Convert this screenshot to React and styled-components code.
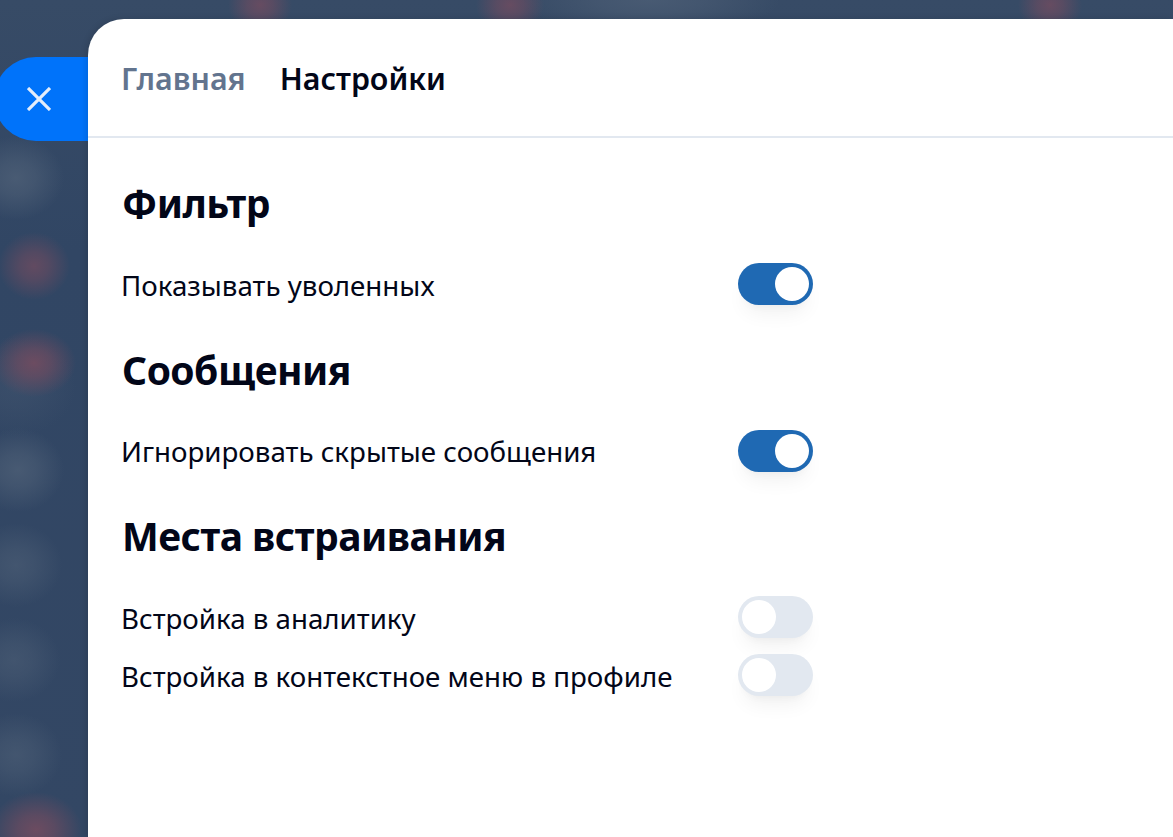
import React from "react";
import styled, { createGlobalStyle } from "styled-components";

const Global = createGlobalStyle`
  html, body { margin: 0; padding: 0; height: 100%; overflow: hidden; }
  body { font-family: "Noto Sans", "Open Sans", "Liberation Sans", sans-serif; background: #324764; }
  #root { height: 100%; }
`;

const blob = (x, y, rx, ry, rgb, a) =>
  `radial-gradient(${rx}px ${ry}px at ${x}px ${y}px, rgba(${rgb},${a}) 0%, rgba(${rgb},${a * 0.7}) 40%, rgba(${rgb},0) 100%)`;
const RED = "114,76,96";
const GREY = "74,92,116";

const Backdrop = styled.div`
  position: relative;
  height: 837px;
  overflow: hidden;
  box-sizing: border-box;
  padding: 19px 0 0 88px;
  background-color: #314664;
  background-image:
    ${blob(34, 266, 36, 34, RED, 0.75)},
    ${blob(34, 363, 42, 34, RED, 0.9)},
    ${blob(36, 830, 46, 38, RED, 0.9)},
    ${blob(260, 5, 32, 30, RED, 0.8)},
    ${blob(510, 5, 34, 30, RED, 0.8)},
    ${blob(1050, 5, 32, 30, RED, 0.8)},
    ${blob(650, 0, 130, 36, GREY, 0.9)},
    ${blob(16, 178, 48, 42, GREY, 0.95)},
    ${blob(16, 386, 60, 50, GREY, 0.35)},
    ${blob(18, 470, 46, 42, GREY, 0.9)},
    ${blob(16, 565, 46, 42, GREY, 0.7)},
    ${blob(14, 660, 46, 42, GREY, 0.65)},
    ${blob(16, 755, 46, 42, GREY, 0.7)},
    linear-gradient(#374b66, #314664 30%, #334764);
`;

const CloseButton = styled.button`
  position: absolute;
  left: -6px;
  top: 57px;
  width: 102px;
  height: 84px;
  border: 0;
  padding: 0 0 0 33px;
  box-sizing: border-box;
  border-radius: 42px 0 0 42px;
  background: #0073fa;
  display: flex;
  align-items: center;
  color: #e3edfb;
`;

const Panel = styled.div`
  position: relative;
  height: 100%;
  background: #fff;
  border-top-left-radius: 36px;
  color: #020618;
  box-shadow: -2px 0 6px rgba(0, 0, 0, 0.12);
`;

const Header = styled.nav`
  display: flex;
  gap: 34px;
  align-items: center;
  height: 117px;
  padding: 0 33px;
  border-bottom: 2px solid #e2e8f0;
`;

const Tab = styled.span`
  font-size: 30.4px;
  font-weight: 600;
  line-height: 40px;
  margin-top: 2px;
  color: ${(p) => (p.$active ? "#020618" : "#62748e")};
`;

const Body = styled.div`
  padding: 35px 34px 0;
  width: 759px;
  box-sizing: border-box;
`;

const Section = styled.section`
  margin-bottom: 34.5px;
`;

const Heading = styled.h2`
  margin: 0 0 30px;
  font-size: 39px;
  line-height: 60px;
  font-weight: 700;
  letter-spacing: -0.5px;
  color: #020618;
`;

const Row = styled.label`
  display: flex;
  justify-content: space-between;
  align-items: center;
  height: 42px;
  & + & { margin-top: 16px; }
`;

const RowLabel = styled.span`
  font-size: 27.7px;
  line-height: 42px;
  margin-top: 1px;
  margin-left: -1px;
  color: #020618;
`;

const Switch = styled.span`
  display: flex;
  align-items: center;
  justify-content: ${(p) => (p.$on ? "flex-end" : "flex-start")};
  width: 75px;
  height: 42px;
  padding: 0 4px;
  box-sizing: border-box;
  border-radius: 21px;
  background: ${(p) => (p.$on ? "#1f69b3" : "#e2e8f0")};
  box-shadow: 0 14px 20px -6px rgba(0, 0, 0, 0.06), 0 6px 10px -6px rgba(0, 0, 0, 0.05);
`;

const Knob = styled.span`
  width: 34px;
  height: 34px;
  border-radius: 50%;
  background: #fff;
`;

const sections = [
  { title: "Фильтр", rows: [{ label: "Показывать уволенных", on: true }] },
  { title: "Сообщения", rows: [{ label: "Игнорировать скрытые сообщения", on: true }] },
  {
    title: "Места встраивания",
    rows: [
      { label: "Встройка в аналитику", on: false },
      { label: "Встройка в контекстное меню в профиле", on: false },
    ],
  },
];

export default function App() {
  return (
    <>
      <Global />
      <Backdrop>
        <CloseButton aria-label="Закрыть">
          <svg width="24" height="24" viewBox="0 0 24 24" fill="none" stroke="currentColor" strokeWidth="3.2">
            <path d="M1 1 L23 23 M23 1 L1 23" />
          </svg>
        </CloseButton>
        <Panel>
          <Header>
            <Tab>Главная</Tab>
            <Tab $active>Настройки</Tab>
          </Header>
          <Body>
            {sections.map((s) => (
              <Section key={s.title}>
                <Heading>{s.title}</Heading>
                {s.rows.map((r) => (
                  <Row key={r.label}>
                    <RowLabel>{r.label}</RowLabel>
                    <Switch $on={r.on}>
                      <Knob />
                    </Switch>
                  </Row>
                ))}
              </Section>
            ))}
          </Body>
        </Panel>
      </Backdrop>
    </>
  );
}
